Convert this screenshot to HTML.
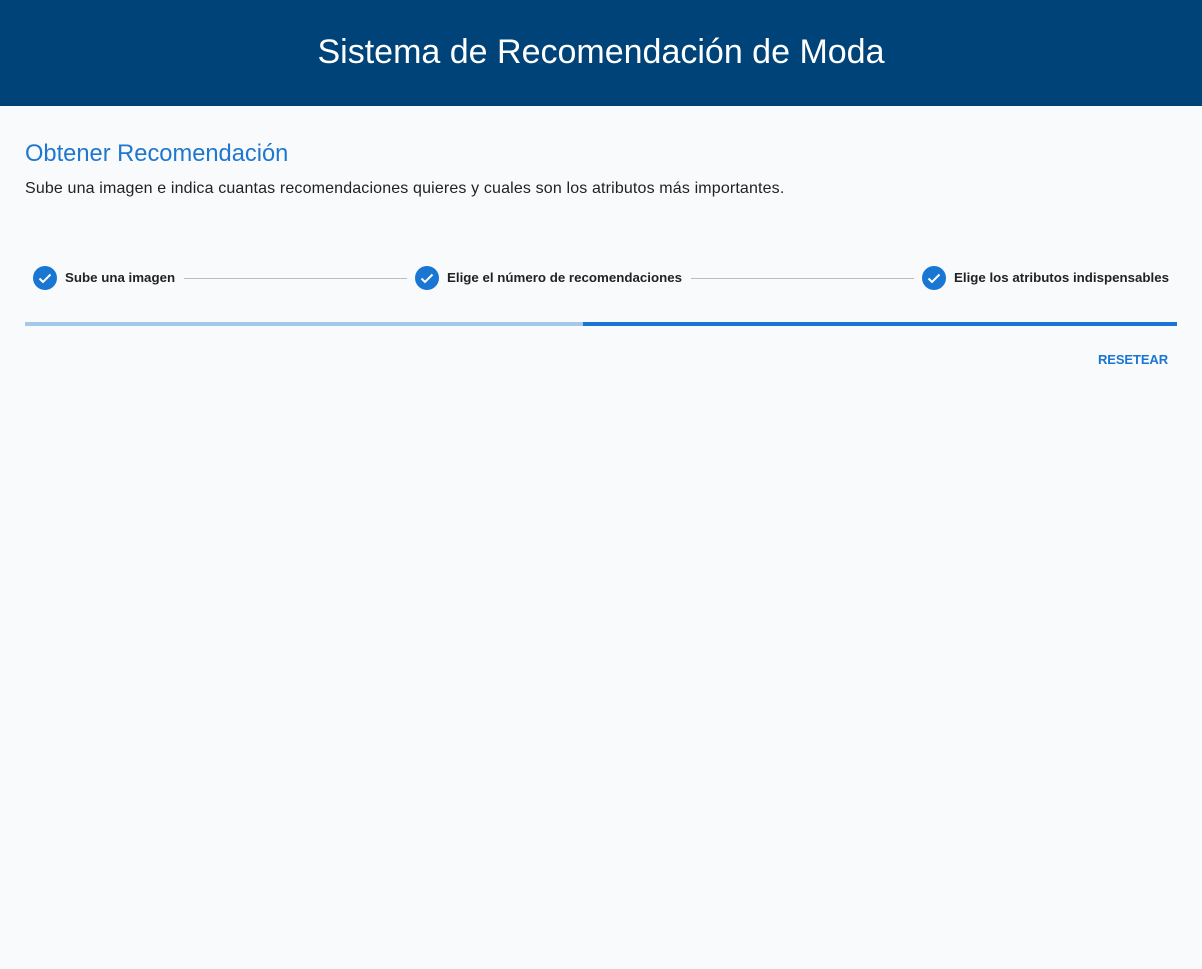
<!DOCTYPE html>
<html><head><meta charset="utf-8"><style>
body{margin:0;width:1202px;height:969px;background:#f9fafb;font-family:"Liberation Sans",sans-serif;position:relative;overflow:hidden}
.hdr{position:absolute;left:0;top:0;width:1202px;height:106px;background:#004379;color:#fff;font-size:34px;text-align:center;line-height:104px}
.a{position:absolute;white-space:nowrap}
.h2{left:25px;top:141px;font-size:23.7px;color:#1f77d0}
.p{left:25px;top:180px;font-size:16px;color:#222;letter-spacing:0.15px}
.c{position:absolute;top:266px;width:24px;height:24px;border-radius:50%;background:#1976d2}
.c svg{position:absolute;left:0;top:0}
.l{top:270px;font-size:13.3px;font-weight:bold;color:#222}
.ln{position:absolute;top:278px;height:1px;background:#bdbdbd}
.bar1{position:absolute;left:25px;top:322px;width:558px;height:4px;background:#a6c8ea}
.bar2{position:absolute;left:583px;top:322px;width:594px;height:4px;background:#1976d2}
.btn{left:1098px;top:352px;font-size:13px;color:#1976d2;font-weight:bold;letter-spacing:-0.1px}
</style></head><body>
<div class="hdr">Sistema de Recomendación de Moda</div>
<div class="a h2">Obtener Recomendación</div>
<div class="a p">Sube una imagen e indica cuantas recomendaciones quieres y cuales son los atributos más importantes.</div>
<div class="c" style="left:33px"><svg width="24" height="24"><path d="M6.5 12.5l3.5 3.5 7.5-7.5" stroke="#fff" stroke-width="2" fill="none"/></svg></div>
<div class="a l" style="left:65px">Sube una imagen</div>
<div class="ln" style="left:184px;width:223px"></div>
<div class="c" style="left:415px"><svg width="24" height="24"><path d="M6.5 12.5l3.5 3.5 7.5-7.5" stroke="#fff" stroke-width="2" fill="none"/></svg></div>
<div class="a l" style="left:447px">Elige el número de recomendaciones</div>
<div class="ln" style="left:691px;width:223px"></div>
<div class="c" style="left:922px"><svg width="24" height="24"><path d="M6.5 12.5l3.5 3.5 7.5-7.5" stroke="#fff" stroke-width="2" fill="none"/></svg></div>
<div class="a l" style="left:954px">Elige los atributos indispensables</div>
<div class="bar1"></div><div class="bar2"></div>
<div class="a btn">RESETEAR</div>
</body></html>
